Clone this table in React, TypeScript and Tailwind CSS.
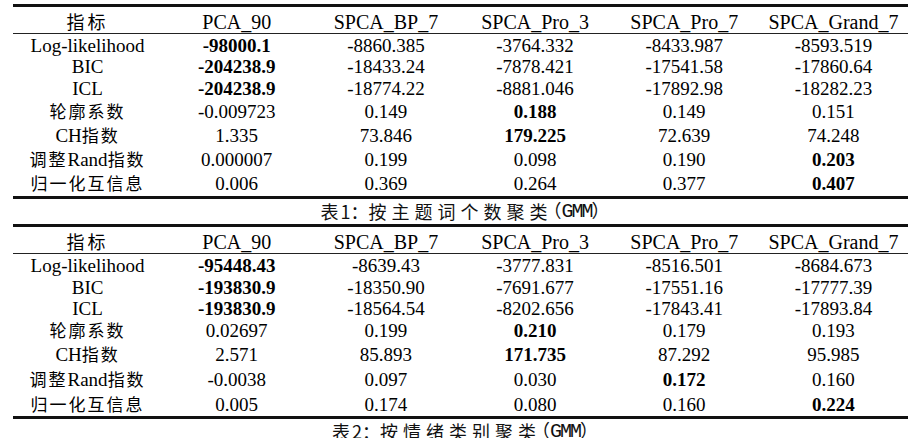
import React from 'react';

type TableData = {
  rows: string[][];
  bold: number[];
  heights: string[];
  caption: React.ReactNode;
};

const headers = ['PCA_90', 'SPCA_BP_7', 'SPCA_Pro_3', 'SPCA_Pro_7', 'SPCA_Grand_7'];

const Zh = ({ children }: { children: React.ReactNode }) => (
  <span className="font-['Noto_Sans_CJK_SC',sans-serif] text-[17px] tracking-[2px]">{children}</span>
);

const labels: React.ReactNode[] = [
  'Log-likelihood',
  'BIC',
  'ICL',
  <Zh>轮廓系数</Zh>,
  <>
    CH<Zh>指数</Zh>
  </>,
  <>
    <Zh>调整</Zh>Rand<Zh>指数</Zh>
  </>,
  <Zh>归一化互信息</Zh>,
];

const Caption = ({ num, body }: { num: string; body: string }) => (
  <div className="h-[25px] flex items-center justify-center font-['Noto_Sans_CJK_SC',sans-serif] text-[18px] text-[#111]">
    <span className="tracking-[2px]">表</span>
    <span>{num}：</span>
    <span className="tracking-[5px]">{body}</span>
    <span className="[font-feature-settings:'halt']">
      （<span className="font-['Liberation_Mono',monospace] text-[20px] tracking-[-2px]">GMM</span>）
    </span>
  </div>
);

const tables: TableData[] = [
  {
    rows: [
      ['-98000.1', '-8860.385', '-3764.332', '-8433.987', '-8593.519'],
      ['-204238.9', '-18433.24', '-7878.421', '-17541.58', '-17860.64'],
      ['-204238.9', '-18774.22', '-8881.046', '-17892.98', '-18282.23'],
      ['-0.009723', '0.149', '0.188', '0.149', '0.151'],
      ['1.335', '73.846', '179.225', '72.639', '74.248'],
      ['0.000007', '0.199', '0.098', '0.190', '0.203'],
      ['0.006', '0.369', '0.264', '0.377', '0.407'],
    ],
    bold: [0, 0, 0, 2, 2, 4, 4],
    heights: ['h-[22px]', 'h-[21px]', 'h-[22px]', 'h-[24px]', 'h-[24px]', 'h-[24px]', 'h-[25px]'],
    caption: <Caption num="1" body="按主题词个数聚类" />,
  },
  {
    rows: [
      ['-95448.43', '-8639.43', '-3777.831', '-8516.501', '-8684.673'],
      ['-193830.9', '-18350.90', '-7691.677', '-17551.16', '-17777.39'],
      ['-193830.9', '-18564.54', '-8202.656', '-17843.41', '-17893.84'],
      ['0.02697', '0.199', '0.210', '0.179', '0.193'],
      ['2.571', '85.893', '171.735', '87.292', '95.985'],
      ['-0.0038', '0.097', '0.030', '0.172', '0.160'],
      ['0.005', '0.174', '0.080', '0.160', '0.224'],
    ],
    bold: [0, 0, 0, 2, 2, 3, 4],
    heights: ['h-[22px]', 'h-[22px]', 'h-[21px]', 'h-[23px]', 'h-[25px]', 'h-[25px]', 'h-[24px]'],
    caption: <Caption num="2" body="按情绪类别聚类" />,
  },
];

const ResultTable = ({ data }: { data: TableData }) => (
  <div className="w-[895px]">
    <div className="h-[3px] bg-[#111]" />
    <div className="grid grid-cols-6 h-[26px] items-center text-center text-[20px]">
      <div>
        <span className="font-['Noto_Sans_CJK_SC',sans-serif] text-[18px] tracking-[3px]">指标</span>
      </div>
      {headers.map((h) => (
        <div key={h}>{h}</div>
      ))}
    </div>
    <div className="h-px bg-[#222]" />
    {data.rows.map((row, i) => (
      <div key={i} className={`grid grid-cols-6 items-center text-center text-[19px] leading-none ${data.heights[i]}`}>
        <div>{labels[i]}</div>
        {row.map((v, j) => (
          <div key={j} className={data.bold[i] === j ? 'font-bold' : ''}>
            {v}
          </div>
        ))}
      </div>
    ))}
    <div className="h-[3px] bg-[#111]" />
    {data.caption}
  </div>
);

export default function App() {
  return (
    <div className="w-[921px] h-[438px] overflow-hidden bg-white pt-[4px] pl-[13px] text-black font-['Liberation_Serif','Noto_Sans_CJK_SC',serif]">
      {tables.map((t, i) => (
        <ResultTable key={i} data={t} />
      ))}
    </div>
  );
}
